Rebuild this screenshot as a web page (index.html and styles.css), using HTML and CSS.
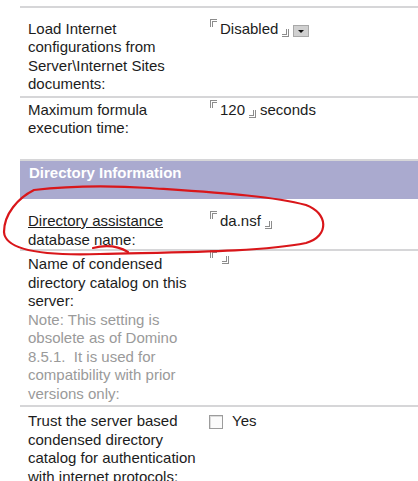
FILE: index.html
```html
<!DOCTYPE html>
<html lang="en">
<head>
    <meta charset="UTF-8">
    <title>Server Configuration</title>
    <link rel="stylesheet" href="styles.css">
</head>
<body>
    <div class="sheet">
        <div class="row row0">
            <div class="label">Cluster name:</div>
            <div class="value"></div>
        </div>
        <div class="row row1">
            <div class="label">Load Internet configurations from Server\Internet Sites documents:</div>
            <div class="value"><span class="mark open"></span>Disabled<span class="mark close"></span><span class="drop"></span></div>
        </div>
        <div class="row row2">
            <div class="label">Maximum formula execution time:</div>
            <div class="value"><span class="mark open"></span>120<span class="mark close"></span> seconds</div>
        </div>
        <div class="section">Directory Information</div>
        <div class="row row3">
            <div class="label"><u>Directory assistance </u><br>database name:</div>
            <div class="value"><span class="mark open"></span>da.nsf<span class="mark close"></span></div>
        </div>
        <div class="row row4">
            <div class="label">Name of condensed directory catalog on this server:
                <div class="note">Note: This setting is obsolete as of Domino 8.5.1.&nbsp; It is used for compatibility with prior versions only:</div>
            </div>
            <div class="value empty"><span class="mark open"></span><span class="mark close"></span></div>
        </div>
        <div class="row row5">
            <div class="label">Trust the server based condensed directory catalog for authentication with internet protocols:</div>
            <div class="value"><span class="check"></span>Yes</div>
        </div>

        <svg class="scribble" width="418" height="481" viewBox="0 0 418 481">
            <path d="M 34 190 C 18 198, 4 214, 4 232 C 5 250, 40 256, 100 254 C 180 252, 262 252, 306 243 C 330 236, 328 213, 306 205 C 272 196, 222 193, 150 188 C 100 185, 60 187, 34 190 Z" />
            <path d="M 93 248 C 105 245, 118 246, 128 252" />
        </svg>
    </div>
</body>
</html>
```

FILE: styles.css
```css
body{
    margin: 0;
    padding: 0;
    background-color: #ffffff;
    color: #1c1c1c;
    font-family: "Liberation Sans", Arial, sans-serif;
    font-size: 15px;
    line-height: 18.5px;
    overflow: hidden;
}
.sheet{
    position: relative;
    margin-top: -14px;
    margin-left: 20px;
}
.row{
    display: grid;
    grid-template-columns: 181px 1fr;
    padding-left: 8px;
    border-bottom: 2px solid #d6d6d8;
}
.row0{ padding-bottom: 1px; }
.row1{ padding-top: 12px; padding-bottom: 2px; }
.row2{ padding-top: 3px; padding-bottom: 21px; }
.row3{ padding-top: 13px; padding-bottom: 0; }
.row4{ padding-top: 4px; padding-bottom: 2px; }
.row5{ padding-top: 5px; border-bottom: none; }
.label{
    padding-right: 4px;
}
.note{
    color: #9a9a9a;
}
.value{
    display: flex;
    align-items: flex-start;
}
.mark{
    display: inline-block;
    width: 4px;
    height: 5px;
    border-color: #8c8c8c;
}
.mark.open{
    border-style: double;
    border-width: 3px 0 0 3px;
    margin: -1px 3px 0 1px;
}
.mark.close{
    border-style: double;
    border-width: 0 3px 3px 0;
    margin: 9px 4px 0 4px;
}
.empty .mark.open{
    margin-top: -5px;
}
.empty .mark.close{
    margin-top: 1px;
    margin-left: 2px;
}
.drop{
    display: inline-block;
    position: relative;
    width: 14px;
    height: 10px;
    margin-top: 5px;
    background-color: #d0d0d0;
    border: 1px solid #a8a8a8;
}
.drop::after{
    content: "";
    position: absolute;
    left: 4px;
    top: 4px;
    border-left: 3px solid transparent;
    border-right: 3px solid transparent;
    border-top: 3px solid #111111;
}
.check{
    display: inline-block;
    width: 12px;
    height: 12px;
    margin: 3px 9px 0 0;
    border: 1px solid #9c9c9c;
    box-shadow: inset 1px 1px 0 #dcdcdc;
    background-color: #fbfbfb;
}
.section{
    background-color: #aaaacf;
    color: #ffffff;
    font-weight: bold;
    padding: 3px 0 17px 9px;
}
.scribble{
    position: absolute;
    left: -20px;
    top: 14px;
    pointer-events: none;
}
.scribble path{
    fill: none;
    stroke: #d9161a;
    stroke-width: 2.2;
    stroke-linecap: round;
}
```
